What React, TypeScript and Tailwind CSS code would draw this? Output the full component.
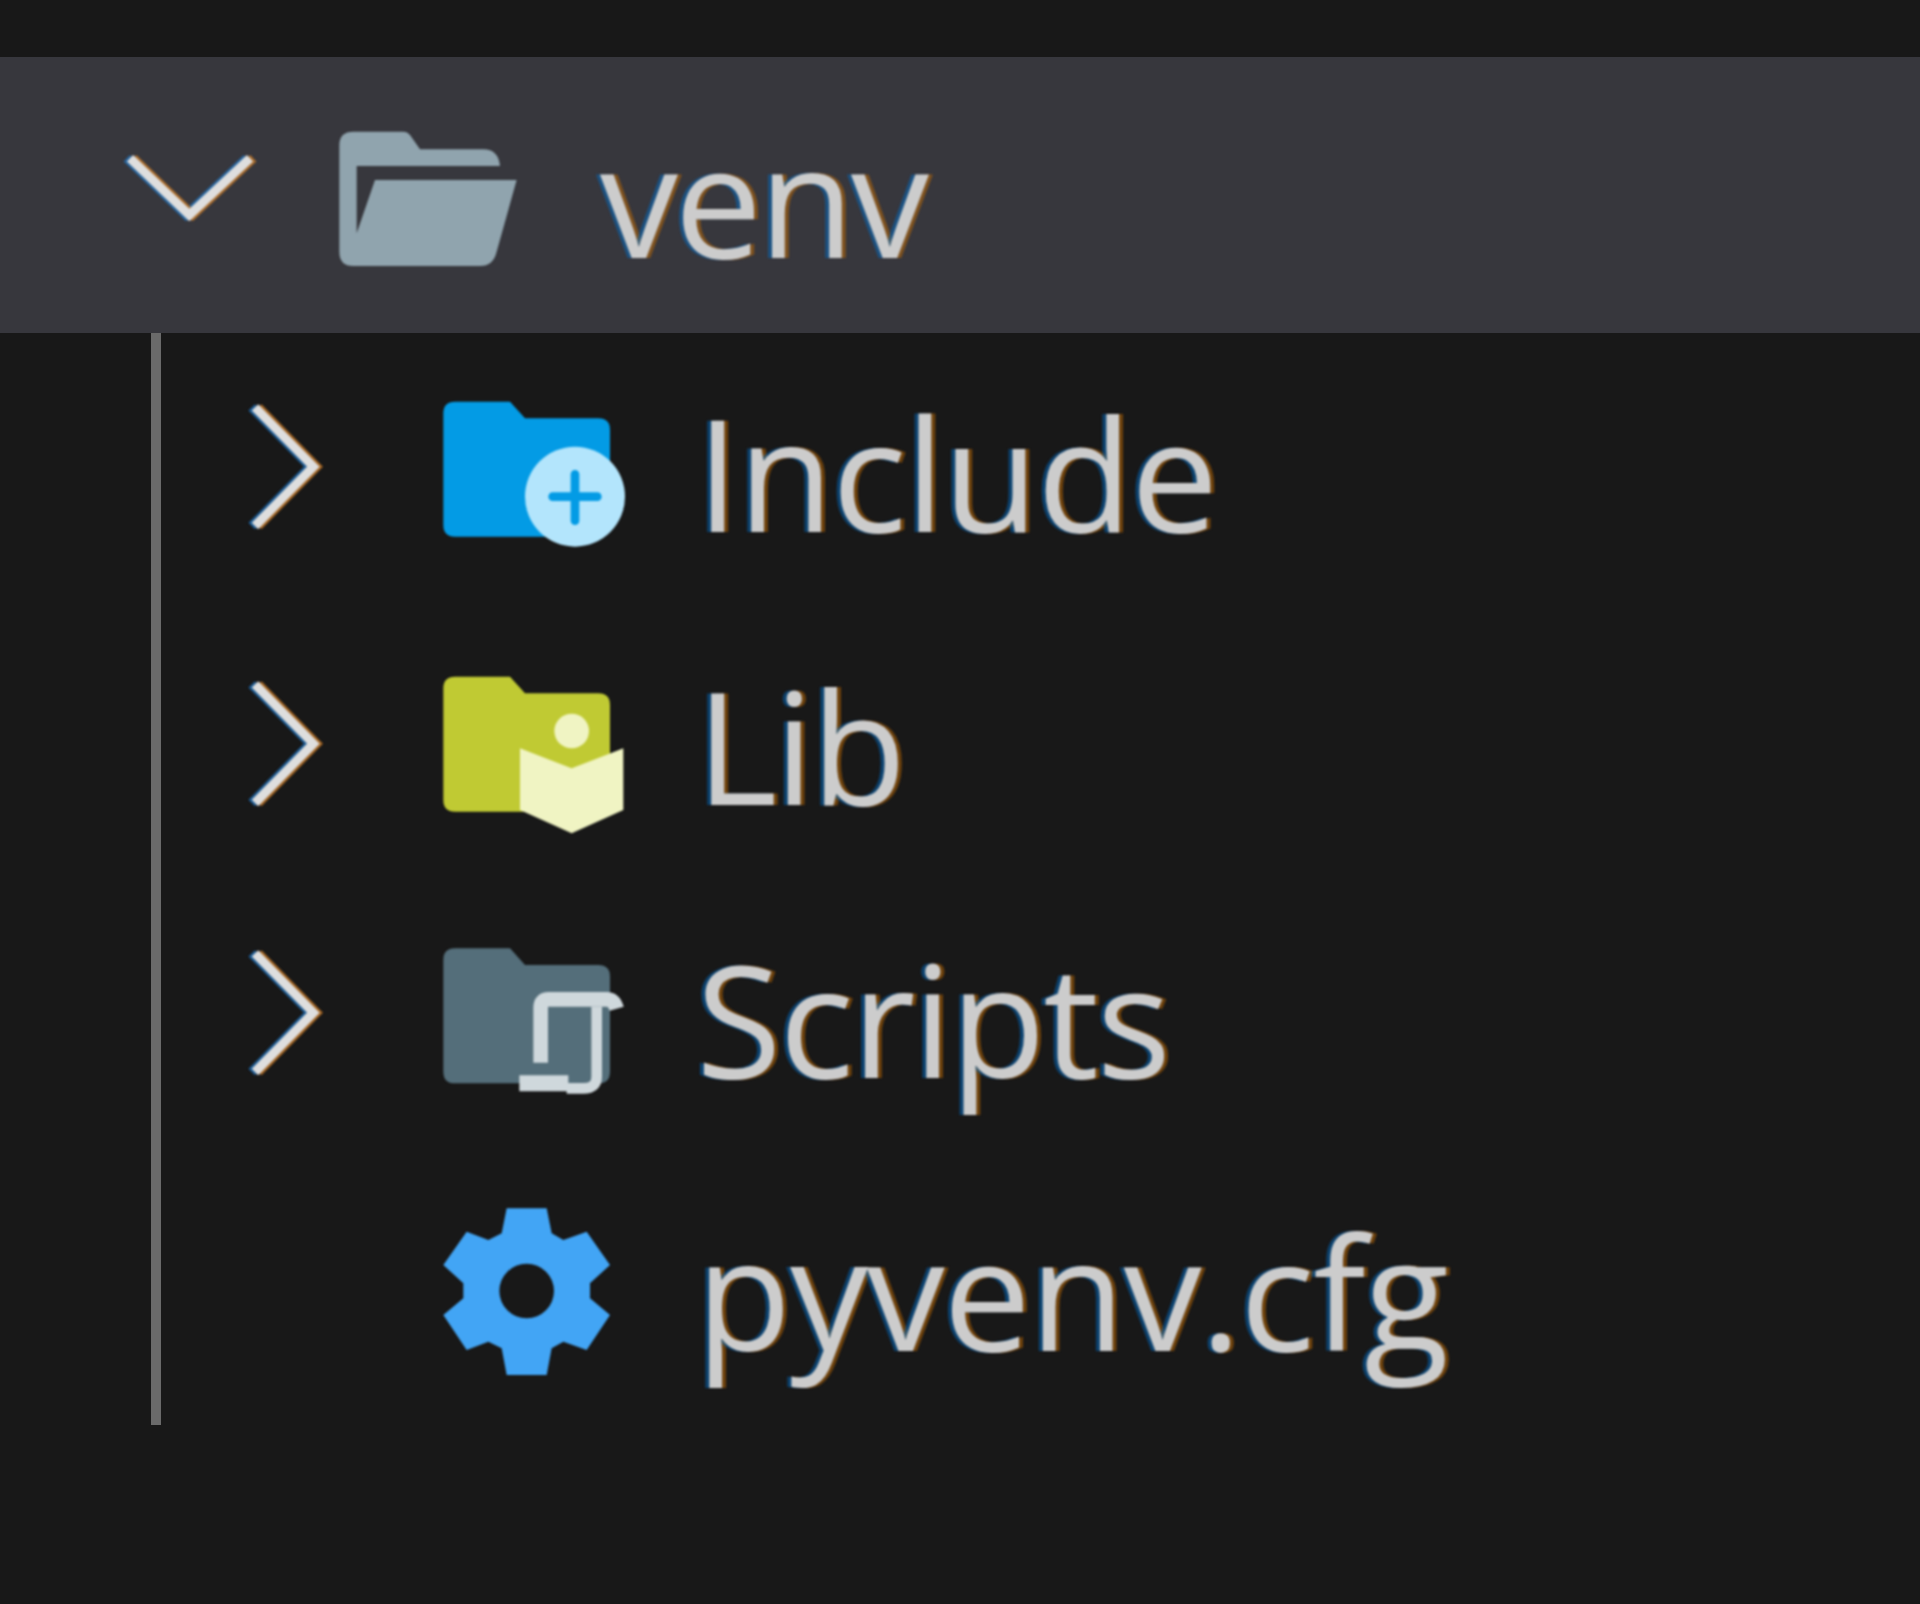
const textClass =
  "mt-[5px] font-['Open_Sans',sans-serif] text-[156px] leading-none whitespace-pre text-[#cccccc] blur-[1px] [text-shadow:-4px_0_1px_rgba(0,110,200,0.5),4px_0_1px_rgba(200,110,0,0.5)]";

const folderPath = (top: number) =>
  `M165,${top} H330 L375,${top + 50} H595 Q630,${top + 50} 630,${top + 85} V${top + 370} Q630,${top + 405} 595,${top + 405} H165 Q130,${top + 405} 130,${top + 370} V${top + 35} Q130,${top} 165,${top} Z`;

const Chevron = ({ points }: { points: string }) => (
  <g fill="none" strokeWidth="27" strokeLinejoin="miter">
    <polyline points={points} stroke="#1f78c8" opacity="0.7" transform="translate(-10 0)" />
    <polyline points={points} stroke="#c87a28" opacity="0.8" transform="translate(10 0)" />
    <polyline points={points} stroke="#dedede" />
  </g>
);

const ChevronRight = ({ className }: { className?: string }) => (
  <svg viewBox="0 0 510 600" className={`w-[170px] h-[200px] shrink-0 blur-[1px] ${className ?? ""}`}>
    <Chevron points="75,112 250,290 75,468" />
  </svg>
);

const IncludeIcon = () => (
  <svg viewBox="0 0 840 600" className="w-[280px] h-[200px] shrink-0 blur-[1px]">
    <path d={folderPath(95)} fill="#039be5" />
    <circle cx="525" cy="380" r="150" fill="#b3e5fc" />
    <path d="M458,380 H592 M525,313 V452" stroke="#039be5" strokeWidth="26" strokeLinecap="round" />
  </svg>
);

const LibIcon = () => (
  <svg viewBox="0 0 840 600" className="w-[280px] h-[200px] shrink-0 mt-[15px] blur-[1px]">
    <path d={folderPath(80)} fill="#c0ca33" />
    <circle cx="515" cy="243" r="52" fill="#f0f4c3" />
    <path d="M360,295 L515,355 L670,295 V480 L515,550 L360,480 Z" fill="#f0f4c3" />
  </svg>
);

const ScriptsIcon = () => (
  <svg viewBox="0 0 840 600" className="w-[280px] h-[200px] shrink-0 mt-[9px] blur-[1px]">
    <path d={folderPath(85)} fill="#546e7a" />
    <g fill="none" stroke="#cfd8dc">
      <path d="M422,428 V262 Q422,238 446,238 H620 Q642,238 650,266" strokeWidth="44" />
      <path d="M590,260 V470 Q590,505 550,505 H500" strokeWidth="32" />
      <path d="M358,490 H505" strokeWidth="48" />
    </g>
  </svg>
);

const GearIcon = () => (
  <svg viewBox="0 0 840 600" className="w-[280px] h-[200px] shrink-0 -mt-[17px] blur-[1px]">
    <path
      fillRule="evenodd"
      fill="#42a5f5"
      d="M320,85 H440 L455,160 L490,180 L560,155 L630,255 L570,310 V355 L630,405 L560,510 L490,485 L455,505 L440,585 H320 L305,505 L265,485 L200,510 L130,405 L190,355 V310 L130,255 L200,155 L265,180 L305,160 Z M380,251 A82,82 0 1,0 380,415 A82,82 0 1,0 380,251 Z"
    />
  </svg>
);

export default function App() {
  return (
    <div className="min-h-[1604px] bg-[#181818] pt-[57px]">
      <div className="flex items-center h-[276px] pl-[100px] bg-[#37373d]">
        <svg viewBox="0 0 660 600" className="w-[220px] h-[200px] shrink-0 blur-[1px]">
          <Chevron points="90,190 268,360 450,190" />
        </svg>
        <svg viewBox="0 0 690 480" className="w-[230px] h-[160px] shrink-0 mt-[10px] blur-[1px]">
          <path
            fill="#90a4ae"
            d="M100,35 H250 Q262,35 270,45 L300,88 H490 Q535,88 540,138 H110 V340 L165,180 H590 L530,395 Q520,438 480,438 H100 Q58,438 58,395 V75 Q58,35 100,35 Z"
          />
        </svg>
        <span className={`ml-[50px] tracking-[-3.4px] ${textClass}`}>venv</span>
      </div>
      <div className="ml-[151px] border-l-[10px] border-[#6a6a6a] pl-[69px]">
        <div className="flex items-center h-[273px]">
          <ChevronRight />
          <IncludeIcon />
          <span className={`ml-[16px] tracking-[-1.6px] ${textClass}`}>Include</span>
        </div>
        <div className="flex items-center h-[273px]">
          <ChevronRight className="mt-[8px]" />
          <LibIcon />
          <span className={`ml-[16px] tracking-[-2.9px] ${textClass}`}>Lib</span>
        </div>
        <div className="flex items-center h-[273px]">
          <ChevronRight />
          <ScriptsIcon />
          <span className={`ml-[16px] tracking-[-2.3px] ${textClass}`}>Scripts</span>
        </div>
        <div className="flex items-center h-[273px] pl-[170px]">
          <GearIcon />
          <span className={`ml-[16px] tracking-[-1.4px] ${textClass}`}>pyvenv.cfg</span>
        </div>
      </div>
    </div>
  );
}
